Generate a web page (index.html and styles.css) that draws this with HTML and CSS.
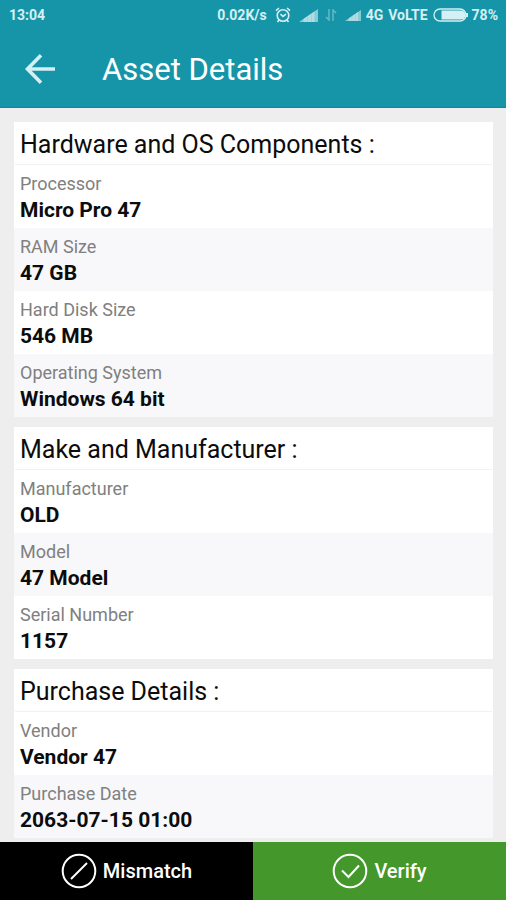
FILE: index.html
```html
<!DOCTYPE html>
<html lang="en">
<head>
<meta charset="utf-8">
<meta name="viewport" content="width=device-width, initial-scale=1">
<title>Asset Details</title>
<link rel="stylesheet" href="styles.css">
</head>
<body>
<header class="top">
  <div class="status">
    <span class="clock">13:04</span>
    <span>0.02K/s</span>
    <svg class="alarm" width="16" height="16" viewBox="0 0 16 16" fill="none" stroke="currentColor" stroke-width="1.6"><circle cx="8" cy="8.5" r="5.8"/><path d="M5.5 7.2 8 9.5l3-2.3M1 3.6 4 1M15 3.6 12 1M4 13l-1.500 2M12 13l1.500 2"/></svg>
    <svg class="signal" width="19" height="13" viewBox="0 0 19 13"><path d="M0 13 19 0v13z" fill="currentColor" opacity="0.75"/><path d="M4.500 9.900 8 7.500V13H4.500zM8.500 7.200 12 4.800V13H8.500zM12.500 4.400 15.500 2.400V13h-3z" fill="currentColor"/></svg>
    <svg class="data" width="12" height="12" viewBox="0 0 12 12" fill="none" stroke="currentColor" stroke-width="1.500"><path d="M4 0v11L1 8M8 12V1l3 3"/></svg>
    <svg class="signal" width="16" height="11" viewBox="0 0 19 13"><path d="M0 13 19 0v13z" fill="currentColor" opacity="0.75"/><path d="M4.500 9.900 8 7.500V13H4.500zM8.500 7.200 12 4.800V13H8.500zM12.500 4.400 15.500 2.400V13h-3z" fill="currentColor"/></svg>
    <span>4G</span>
    <span>VoLTE</span>
    <svg class="battery" width="35" height="14" viewBox="0 0 35 14"><rect x="1" y="1" width="32" height="12" rx="6" fill="none" stroke="currentColor" stroke-width="1.300"/><path d="M8.500 2.500H28a4.500 4.500 0 0 1 0 9H8.500z" fill="currentColor"/><path d="M34 5v4" stroke="currentColor" stroke-width="2"/></svg>
    <span>78%</span>
  </div>
  <div class="appbar">
    <button class="back" type="button" aria-label="Back"><svg width="32" height="32" viewBox="0 0 32 32" fill="none" stroke="currentColor" stroke-width="3.600"><path d="M17 1.300 3.500 15 17 28.700M4 15h27"/></svg></button>
    <h1>Asset Details</h1>
  </div>
</header>
<main class="content">
  <section class="card">
    <h2>Hardware and OS Components :</h2>
    <dl>
      <div class="row"><dt>Processor</dt><dd>Micro Pro 47</dd></div>
      <div class="row"><dt>RAM Size</dt><dd>47 GB</dd></div>
      <div class="row"><dt>Hard Disk Size</dt><dd>546 MB</dd></div>
      <div class="row"><dt>Operating System</dt><dd>Windows 64 bit</dd></div>
    </dl>
  </section>
  <section class="card">
    <h2>Make and Manufacturer :</h2>
    <dl>
      <div class="row"><dt>Manufacturer</dt><dd>OLD</dd></div>
      <div class="row"><dt>Model</dt><dd>47 Model</dd></div>
      <div class="row"><dt>Serial Number</dt><dd>1157</dd></div>
    </dl>
  </section>
  <section class="card">
    <h2>Purchase Details :</h2>
    <dl>
      <div class="row"><dt>Vendor</dt><dd>Vendor 47</dd></div>
      <div class="row"><dt>Purchase Date</dt><dd>2063-07-15 01:00</dd></div>
    </dl>
  </section>
</main>
<footer class="actions">
  <button class="action mismatch" type="button"><svg width="36" height="36" viewBox="0 0 36 36" fill="none" stroke="currentColor" stroke-width="2"><circle cx="18" cy="18" r="16.300"/><path d="M10 26 26 10"/></svg>Mismatch</button>
  <button class="action verify" type="button"><svg width="36" height="36" viewBox="0 0 36 36" fill="none" stroke="currentColor" stroke-width="2"><circle cx="18" cy="18" r="16.300"/><path d="M10 17.500l6.500 6.500L27 12.500"/></svg>Verify</button>
</footer>
</body>
</html>
```
FILE: styles.css
```css
* {
  box-sizing: border-box;
}

body {
  margin: 0;
  height: 100vh;
  display: flex;
  flex-direction: column;
  background: #eee;
  color: #0c0c0c;
  font-family: Roboto, "Liberation Sans", sans-serif;
}

h1, h2, dl, dd {
  margin: 0;
}

button {
  border: 0;
  padding: 0;
  font: inherit;
  color: inherit;
}

svg {
  display: block;
  flex: none;
}

.top {
  flex: none;
  background: #1795a8;
  color: #fff;
  border-bottom: 1px solid #12869a;
}

.status {
  display: flex;
  align-items: center;
  height: 30px;
  padding: 0 8px 0 9px;
  color: #d5f0f4;
  font-size: 14px;
  font-weight: 700;
}

.clock {
  margin-right: auto;
}

.alarm {
  margin-left: 8px;
}

.signal {
  margin-left: 8px;
  opacity: 0.8;
}

.data {
  margin-left: 7px;
  opacity: 0.4;
}

.status .signal ~ span {
  margin-left: 5px;
}

.battery {
  margin-left: 5px;
}

.status .battery + span {
  margin-left: 4px;
}

.appbar {
  display: flex;
  align-items: center;
  gap: 46px;
  height: 77px;
  padding: 2px 24px 0;
}

.back {
  background: none;
  color: #d5f0f4;
}

h1 {
  font-size: 31px;
  line-height: 36px;
  font-weight: 400;
}

.content {
  flex: 1;
  min-height: 0;
  overflow: hidden;
  padding: 14px 13px 0 14px;
}

.card {
  margin-bottom: 10px;
  background: #fff;
}

h2 {
  height: 43px;
  margin: 0 1px;
  padding: 0 5px;
  border-bottom: 1px solid #f1f1f1;
  font-size: 25px;
  line-height: 46px;
  font-weight: 400;
}

.row {
  height: 63px;
  padding: 8px 6px 0;
}

.row:nth-child(even) {
  background: #f8f8fb;
}

dt {
  color: #808080;
  font-size: 18px;
  line-height: 22px;
}

dd {
  font-size: 21px;
  line-height: 30px;
  font-weight: 700;
}

.actions {
  flex: none;
  display: flex;
  height: 58px;
}

.action {
  flex: 1;
  display: flex;
  align-items: center;
  justify-content: center;
  gap: 6px;
  color: #fff;
  font-size: 20px;
  font-weight: 500;
}

.mismatch {
  background: #000;
}

.verify {
  background: #44972a;
}
```
